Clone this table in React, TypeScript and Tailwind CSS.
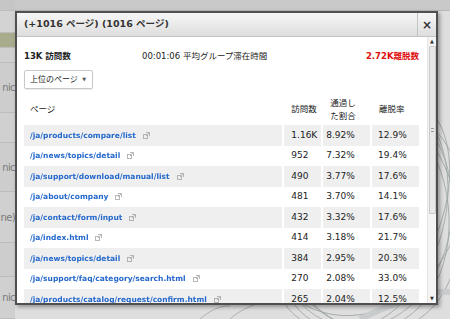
import React from 'react';

const font = { fontFamily: '"DejaVu Sans", "Noto Sans CJK JP", sans-serif' };

const rows = [
  { path: '/ja/products/compare/list', v: '1.16K', p: '8.92%', e: '12.9%' },
  { path: '/ja/news/topics/detail', v: '952', p: '7.32%', e: '19.4%' },
  { path: '/ja/support/download/manual/list', v: '490', p: '3.77%', e: '17.6%' },
  { path: '/ja/about/company', v: '481', p: '3.70%', e: '14.1%' },
  { path: '/ja/contact/form/input', v: '432', p: '3.32%', e: '17.6%' },
  { path: '/ja/index.html', v: '414', p: '3.18%', e: '21.7%' },
  { path: '/ja/news/topics/detail', v: '384', p: '2.95%', e: '20.3%' },
  { path: '/ja/support/faq/category/search.html', v: '270', p: '2.08%', e: '33.0%' },
  { path: '/ja/products/catalog/request/confirm.html', v: '265', p: '2.04%', e: '12.5%' },
];

const side = [
  { h: 'h-[11px]', bg: 'bg-[#c6c6c6]', t: '' },
  { h: 'h-[22px]', bg: 'bg-[#d3d3d3]', t: '' },
  { h: 'h-[15px]', bg: 'bg-[#a8ab8c]', t: '' },
  { h: 'h-[15px]', bg: 'bg-[#d0d0d0]', t: '' },
  { h: 'h-[50px]', bg: 'bg-[#cdcdcd]', t: 'nic' },
  { h: 'h-[30px]', bg: 'bg-[#d0d0d0]', t: '' },
  { h: 'h-[49px]', bg: 'bg-[#cdcdcd]', t: 'nic' },
  { h: 'h-[51px]', bg: 'bg-[#d0d0d0]', t: 'ne)' },
  { h: 'h-[34px]', bg: 'bg-[#cdcdcd]', t: '' },
  { h: 'h-[42px]', bg: 'bg-[#d0d0d0]', t: 'nic' },
];

function ExtIcon() {
  return (
    <svg width="7" height="7" viewBox="0 0 7 7" className="ml-[7px] shrink-0 opacity-70">
      <rect x="0.5" y="2.5" width="4" height="4" fill="none" stroke="#9a9a9a" />
      <path d="M3 0.5h3.5V4M6.5 0.5L3 4" fill="none" stroke="#9a9a9a" />
    </svg>
  );
}

export default function App() {
  return (
    <div className="relative w-[450px] h-[319px] overflow-hidden bg-[#dcdcdc]" style={font}>
      {/* background page */}
      <div className="flex h-full">
        <div className="flex w-[15px] flex-col">
          {side.map((s, i) => (
            <div
              key={i}
              className={`${s.h} ${s.bg} flex items-center justify-end border-b border-[#bdbdbd] whitespace-nowrap text-[10px] tracking-[-0.6px] text-[#7a7a7a]`}
            >
              {s.t}
            </div>
          ))}
          <div className="flex-1 bg-[#cdcdcd]" />
        </div>
        <div className="flex-1 bg-[#dedede]" />
      </div>
      <svg className="absolute left-0 top-0" width="450" height="319" viewBox="0 0 450 319">
        <rect x="15" y="0" width="435" height="10" fill="#c9c9c9" />
        <line x1="15" y1="10.5" x2="450" y2="10.5" stroke="#b8b8b8" />
        <g fill="none" stroke="#9fa7a7" strokeWidth="0.8">
          <ellipse cx="360" cy="210" rx="95" ry="125" transform="rotate(-20 360 210)" />
          <ellipse cx="360" cy="210" rx="88" ry="120" transform="rotate(-10 360 210)" />
          <ellipse cx="360" cy="210" rx="92" ry="118" transform="rotate(5 360 210)" />
          <ellipse cx="360" cy="210" rx="85" ry="122" transform="rotate(15 360 210)" />
          <ellipse cx="360" cy="210" rx="80" ry="125" transform="rotate(25 360 210)" />
          <ellipse cx="360" cy="210" rx="96" ry="110" transform="rotate(35 360 210)" />
          <path d="M230 319 C250 300 300 290 330 300" />
          <path d="M200 319 C210 310 222 305 230 306" />
        </g>
        <path d="M360 319 C400 300 430 290 450 292" fill="none" stroke="#c8cccc" strokeWidth="6" />
      </svg>

      {/* dialog */}
      <div className="absolute left-[15px] top-[11px] flex h-[294px] w-[423px] flex-col border-2 border-[#505050] bg-white shadow-[2px_2px_4px_rgba(0,0,0,0.35)]">
        <div className="flex h-[24px] shrink-0 items-stretch border-b border-[#c4c4c4] bg-gradient-to-b from-[#f6f6f6] to-[#dedede]">
          <div className="flex flex-1 items-center pl-[7px] text-[9.5px] font-bold text-[#333]">
            (+1016 ページ) (1016 ページ)
          </div>
          <div className="flex w-[19px] items-center justify-center border-l border-[#c4c4c4] text-[12px] font-bold text-[#333]">
            ×
          </div>
        </div>
        <div className="flex min-h-0 flex-1">
          <div className="flex-1 overflow-hidden pl-[7px] pr-[8px]">
            <div className="flex h-[27px] items-end pb-[1px] text-[8.5px]">
              <div className="w-[118px] font-bold text-[#222]">13K 訪問数</div>
              <div className="flex-1 text-[#222]">00:01:06 平均グループ滞在時間</div>
              <div className="font-bold text-[#e01010]">2.72K離脱数</div>
            </div>
            <div className="mt-[6px] flex h-[19px] w-[69px] items-center justify-between rounded-[2px] border border-[#c8c8c8] bg-white pl-[5px] pr-[6px] text-[8px] text-[#222] shadow-[0_1px_1px_rgba(0,0,0,0.08)]">
              <span className="whitespace-nowrap">上位のページ</span>
              <span className="text-[5px] text-[#555]">▼</span>
            </div>
            <div className="mt-[5px] flex h-[31px] items-center gap-x-[2px] text-[8.5px] text-[#222]">
              <div className="w-[259px] pl-[6px]">ページ</div>
              <div className="w-[37px] whitespace-nowrap pl-[7px]">訪問数</div>
              <div className="w-[47px] pl-[7px] leading-[13px]">
                通過し
                <br />
                た割合
              </div>
              <div className="w-[47px] whitespace-nowrap pl-[7px]">離脱率</div>
            </div>
            {rows.map((r, i) => (
              <div key={i} className="flex h-[20.5px] gap-x-[2px] text-[9px] text-[#222]">
                <div className={`flex w-[259px] items-center pl-[6px] ${i % 2 === 0 ? 'bg-[#efefef]' : 'bg-white'}`}>
                  <span className="whitespace-nowrap text-[7.5px] font-semibold text-[#2468cc] blur-[0.6px]">
                    {r.path}
                  </span>
                  <ExtIcon />
                </div>
                <div className={`flex w-[37px] items-center pl-[7px] ${i % 2 === 0 ? 'bg-[#efefef]' : 'bg-white'}`}>{r.v}</div>
                <div className={`flex w-[47px] items-center pl-[3px] ${i % 2 === 0 ? 'bg-[#efefef]' : 'bg-white'}`}>{r.p}</div>
                <div className={`flex w-[47px] items-center pl-[6px] ${i % 2 === 0 ? 'bg-[#efefef]' : 'bg-white'}`}>{r.e}</div>
              </div>
            ))}
          </div>
          {/* scrollbar */}
          <div className="flex w-[9px] flex-col items-center border-l border-[#e4e4e4] bg-[#f4f4f4]">
            <div className="flex h-[9px] items-center text-[5px] text-[#333]">▲</div>
            <div className="flex h-[168px] w-[7px] items-center justify-center rounded-[1px] border border-[#c8c8c8] bg-[#e8e8e8]">
              <div className="h-[4px] w-[3px] border-y border-[#999]" />
            </div>
            <div className="flex-1" />
            <div className="flex h-[9px] items-center text-[5px] text-[#333]">▼</div>
          </div>
        </div>
      </div>
    </div>
  );
}
